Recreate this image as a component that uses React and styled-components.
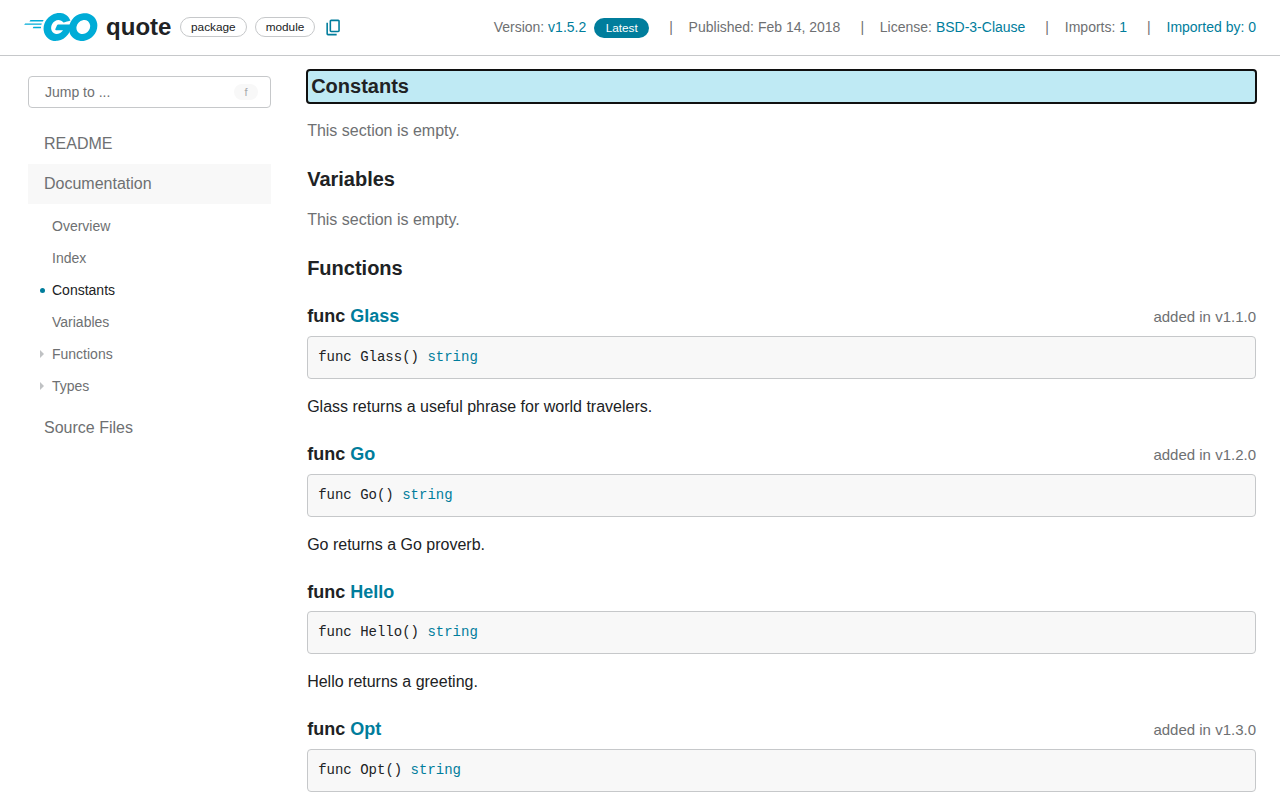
import React from "react";
import styled, { createGlobalStyle } from "styled-components";

const color = {
  text: "#202224",
  subtle: "#6e7072",
  brand: "#007d9c",
  border: "#c6c8ca",
  panel: "#f8f8f8",
};

const GlobalStyle = createGlobalStyle`
  *, *::before, *::after { box-sizing: border-box; }
  html, body { margin: 0; height: 800px; overflow: hidden; background: #fff; }
  body { font: 16px/24px "Liberation Sans", Arial, sans-serif; color: ${color.text}; }
  h1, h2, h3, h4, p, pre, ul { margin: 0; padding: 0; }
  a { color: ${color.brand}; text-decoration: none; }
`;

const Header = styled.header`
  height: 56px;
  padding: 0 24px;
  display: flex;
  align-items: flex-start;
  justify-content: space-between;
  border-bottom: 1px solid ${color.border};
`;

const Brand = styled.div`
  display: flex;
  align-items: center;
  height: 54px;
`;

const LogoSvg = styled.svg`
  display: block;
  width: 73.6px;
  height: 28.4px;
  margin-top: 0.6px;
  flex: none;
`;

const Title = styled.h1`
  font-size: 24px;
  line-height: 30px;
  margin: 0 8.6px 0 8.5px;
`;

const Chip = styled.span`
  height: 20px;
  padding: 0 10px;
  margin-right: 8px;
  border: 1px solid ${color.border};
  border-radius: 10px;
  font-size: 11.8px;
  line-height: 18px;
`;

const CopyButton = styled.button`
  border: 0;
  background: none;
  padding: 0;
  margin-left: 0.3px;
  display: flex;
`;

const Meta = styled.div`
  display: flex;
  align-items: center;
  height: 54px;
  font-size: 14px;
  line-height: 20px;
  color: ${color.subtle};
  white-space: pre;
`;

const Divider = styled.span`
  margin: 0 15.8px 0 20px;
`;

const Latest = styled.span`
  height: 20px;
  margin: 2px 0 0 8px;
  padding: 0 11.4px;
  border-radius: 10px;
  background: ${color.brand};
  color: #fff;
  font-size: 11.8px;
  line-height: 20px;
`;

const Body = styled.div`
  display: flex;
  padding: 0 24px 0 28px;
  gap: 36.15px;
`;

const Sidebar = styled.nav`
  width: 243px;
  flex: none;
  padding-top: 20px;
  color: ${color.subtle};
`;

const Jump = styled.div`
  height: 32px;
  padding: 0 12px 0 16px;
  margin-bottom: 16px;
  border: 1px solid ${color.border};
  border-radius: 4px;
  display: flex;
  align-items: center;
  justify-content: space-between;
  font-size: 14px;
`;

const KeyHint = styled.span`
  width: 24px;
  height: 16px;
  border-radius: 8px;
  background: ${color.panel};
  color: #a6a8aa;
  font-size: 11px;
  line-height: 16px;
  text-align: center;
`;

const NavItem = styled.div`
  height: 40px;
  padding-left: 16px;
  line-height: 39px;
  background: ${(p) => (p.$active ? color.panel : "transparent")};
`;

const SubNav = styled.ul`
  list-style: none;
  padding: 6px 0 6px 12px;
`;

const SubItem = styled.li`
  height: 32px;
  display: flex;
  align-items: center;
  font-size: 14px;
  line-height: 32px;
  color: ${(p) => (p.$active ? color.text : "inherit")};
`;

const Marker = styled.span`
  width: 12px;
  display: flex;
`;

const Dot = styled.i`
  width: 5px;
  height: 5px;
  margin-top: 1px;
  border-radius: 50%;
  background: ${color.brand};
`;

const Arrow = styled.i`
  border-left: 4px solid #c0c2c4;
  border-top: 4px solid transparent;
  border-bottom: 4px solid transparent;
`;

const Main = styled.main`
  flex: 1;
  min-width: 0;
  padding-top: 13px;
`;

const Heading = styled.h3`
  height: 31px;
  margin-top: 19px;
  font-size: 20px;
  line-height: 35px;
`;

const TargetHeading = styled(Heading)`
  height: 35px;
  margin: 0 -1px;
  padding-left: 3px;
  line-height: 31px;
  border: 2px solid #101010;
  border-radius: 4px;
  background: #bfeaf4;
`;

const Empty = styled.p`
  height: 24px;
  margin: 15px 0;
  color: ${color.subtle};
`;

const FunctionBlock = styled.section`
  height: 137.6px;

  &:last-child {
    height: auto;
  }
`;

const FunctionHeader = styled.div`
  display: flex;
  justify-content: space-between;
  height: 31.7px;
  line-height: 24px;
`;

const FunctionName = styled.h4`
  font-size: 18px;
`;

const Since = styled.span`
  font-size: 15px;
  padding-top: 0.7px;
  color: ${color.subtle};
`;

const Code = styled.pre`
  height: 43px;
  padding: 10px;
  border: 1px solid ${color.border};
  border-radius: 4px;
  background: ${color.panel};
  font: 14px/20px "Liberation Mono", monospace;
`;

const Doc = styled.p`
  padding-top: 16px;
`;

const FunctionList = styled.div`
  padding-top: 22.4px;
`;

const functions = [
  { name: "Glass", since: "v1.1.0", doc: "Glass returns a useful phrase for world travelers." },
  { name: "Go", since: "v1.2.0", doc: "Go returns a Go proverb." },
  { name: "Hello", doc: "Hello returns a greeting." },
  { name: "Opt", since: "v1.3.0" },
];

const sections = ["Overview", "Index", "Constants", "Variables", "Functions", "Types"];

function Logo() {
  return (
    <LogoSvg viewBox="24.3 78 206.5 77.5" preserveAspectRatio="none" fill="#00acd7" role="img" aria-label="Go">
      <path d="M40.2,101.1c-0.4,0-0.5-0.2-0.3-0.5l2.1-2.7c0.2-0.3,0.7-0.5,1.1-0.5l35.7,0c0.4,0,0.5,0.3,0.3,0.6l-1.7,2.6c-0.2,0.3-0.7,0.6-1,0.6L40.2,101.1z" />
      <path d="M25.1,110.3c-0.4,0-0.5-0.2-0.3-0.5l2.1-2.7c0.2-0.3,0.7-0.5,1.1-0.5l45.6,0c0.4,0,0.6,0.3,0.5,0.6l-0.8,2.4c-0.1,0.4-0.5,0.6-0.9,0.6L25.1,110.3z" />
      <path d="M49.3,119.5c-0.4,0-0.5-0.3-0.3-0.6l1.4-2.5c0.2-0.3,0.6-0.6,1-0.6l20,0c0.4,0,0.6,0.3,0.6,0.7l-0.2,2.4c0,0.4-0.4,0.7-0.7,0.7L49.3,119.5z" />
      <path d="M153.1,99.3c-6.3,1.6-10.6,2.8-16.8,4.4c-1.5,0.4-1.6,0.5-2.9-1c-1.5-1.7-2.6-2.8-4.7-3.8c-6.3-3.1-12.4-2.2-18.1,1.5c-6.8,4.4-10.3,10.9-10.2,19c0.1,8,5.6,14.6,13.5,15.7c6.8,0.9,12.5-1.5,17-6.6c0.9-1.1,1.7-2.3,2.7-3.7c-3.6,0-8.1,0-19.3,0c-2.1,0-2.6-1.3-1.9-3c1.3-3.1,3.7-8.3,5.1-10.9c0.3-0.6,1-1.6,2.5-1.6c5.1,0,23.9,0,36.4,0c-0.2,2.7-0.2,5.4-0.6,8.1c-1.1,7.2-3.8,13.8-8.2,19.6c-7.2,9.5-16.6,15.4-28.5,17c-9.8,1.3-18.9-0.6-26.9-6.6c-7.4-5.6-11.6-13-12.7-22.2c-1.3-10.9,1.9-20.7,8.5-29.3c7.1-9.3,16.5-15.2,28-17.3c9.4-1.7,18.4-0.6,26.5,4.9c5.3,3.5,9.1,8.3,11.6,14.1C154.7,98.5,154.3,99,153.1,99.3z" />
      <path d="M186.2,154.6c-9.1-0.2-17.4-2.8-24.4-8.8c-5.9-5.1-9.6-11.6-10.8-19.3c-1.8-11.3,1.3-21.3,8.1-30.2c7.3-9.6,16.1-14.6,28-16.7c10.2-1.8,19.8-0.8,28.5,5.1c7.9,5.4,12.8,12.7,14.1,22.3c1.7,13.5-2.2,24.5-11.5,33.9c-6.6,6.7-14.7,10.9-24,12.8C191.5,154.2,188.8,154.3,186.2,154.6z M210,114.2c-0.1-1.3-0.1-2.3-0.3-3.3c-1.8-9.9-10.9-15.5-20.4-13.3c-9.3,2.1-15.3,8-17.5,17.4c-1.8,7.8,2,15.7,9.2,18.9c5.5,2.4,11,2.1,16.3-0.6C205.2,129.2,209.5,122.8,210,114.2z" />
    </LogoSvg>
  );
}

function CopyIcon() {
  return (
    <svg width="19" height="19" viewBox="0 -960 960 960" fill={color.brand}>
      <path d="M360-240q-33 0-56.5-23.5T280-320v-480q0-33 23.5-56.5T360-880h360q33 0 56.5 23.5T800-800v480q0 33-23.5 56.5T720-240H360Zm0-80h360v-480H360v480ZM200-80q-33 0-56.5-23.5T120-160v-560h80v560h440v80H200Z" />
    </svg>
  );
}

export default function App() {
  return (
    <>
      <GlobalStyle />
      <Header>
        <Brand>
          <Logo />
          <Title>quote</Title>
          <Chip>package</Chip>
          <Chip>module</Chip>
          <CopyButton aria-label="Copy path"><CopyIcon /></CopyButton>
        </Brand>
        <Meta>
          <span>Version: <a href="#v">v1.5.2</a></span>
          <Latest>Latest</Latest>
          <Divider>|</Divider>
          <span>Published: Feb 14, 2018</span>
          <Divider>|</Divider>
          <span>License: <a href="#l">BSD-3-Clause</a></span>
          <Divider>|</Divider>
          <span>Imports: <a href="#i">1</a></span>
          <Divider>|</Divider>
          <a href="#b">Imported by: 0</a>
        </Meta>
      </Header>
      <Body>
        <Sidebar>
          <Jump>Jump to ...<KeyHint>f</KeyHint></Jump>
          <NavItem>README</NavItem>
          <NavItem $active>Documentation</NavItem>
          <SubNav>
            {sections.map((name) => (
              <SubItem key={name} $active={name === "Constants"}>
                <Marker>
                  {name === "Constants" && <Dot />}
                  {(name === "Functions" || name === "Types") && <Arrow />}
                </Marker>
                {name}
              </SubItem>
            ))}
          </SubNav>
          <NavItem>Source Files</NavItem>
        </Sidebar>
        <Main>
          <TargetHeading>Constants</TargetHeading>
          <Empty>This section is empty.</Empty>
          <Heading>Variables</Heading>
          <Empty>This section is empty.</Empty>
          <Heading>Functions</Heading>
          <FunctionList>
            {functions.map((f) => (
              <FunctionBlock key={f.name}>
                <FunctionHeader>
                  <FunctionName>func <a href={"#" + f.name}>{f.name}</a></FunctionName>
                  {f.since && <Since>added in {f.since}</Since>}
                </FunctionHeader>
                <Code>func {f.name}() <a href="#string">string</a></Code>
                {f.doc && <Doc>{f.doc}</Doc>}
              </FunctionBlock>
            ))}
          </FunctionList>
        </Main>
      </Body>
    </>
  );
}
